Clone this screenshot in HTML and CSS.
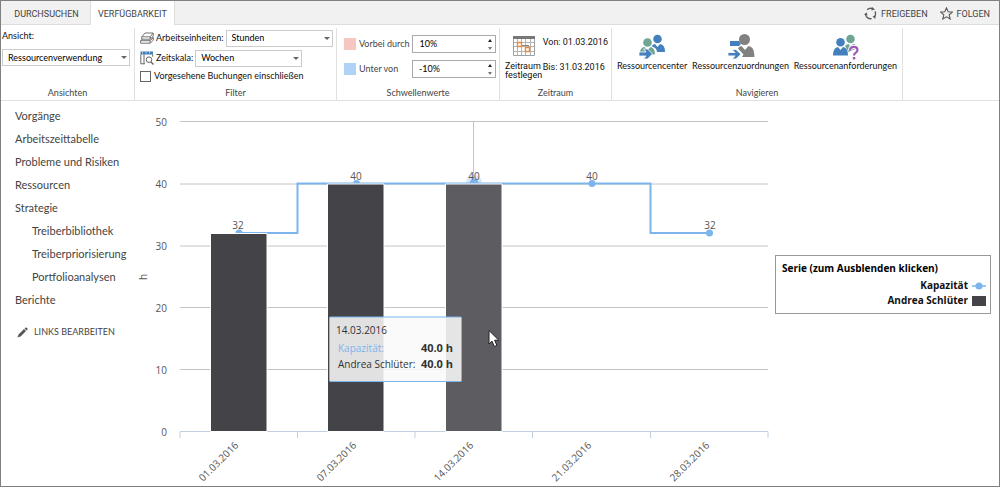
FILE: index.html
```html
<!DOCTYPE html>
<html lang="de">
<head>
<meta charset="utf-8">
<title>Ressourcenverwendung</title>
<link rel="stylesheet" href="styles.css">
</head>
<body>
<div class="app">
  <header class="topbar">
    <nav class="tabs">
      <button class="tab" type="button">DURCHSUCHEN</button>
      <button class="tab tab-active" type="button">VERFÜGBARKEIT</button>
    </nav>
    <div class="actions">
      <button class="action" type="button">
        <svg width="13" height="13" viewBox="0 0 13 13" fill="none" stroke="#5a5a5a" stroke-width="1.3"><path d="M3.2 2.8A5 5 0 0 1 8.6 1.7M11 4.4A5 5 0 0 1 10.2 9.9M7.6 11.6A5 5 0 0 1 1.6 7.6"/><path d="M8 0l3 2.6-3.6 1zM11.8 8.200l-.6 3.700-2.700-2.300zM0 7.800l2.600-2.600.9 3.400z" fill="#5a5a5a" stroke="none"/></svg>
        FREIGEBEN
      </button>
      <button class="action" type="button">
        <svg width="13" height="13" viewBox="0 0 13 13" fill="none" stroke="#5a5a5a" stroke-width="1.1"><path d="M6.500.9l1.700 3.900 4.200.3-3.200 2.700 1 4.200-3.700-2.200-3.700 2.200 1-4.200L.6 5.100l4.200-.3z"/></svg>
        FOLGEN
      </button>
    </div>
  </header>

  <section class="ribbon">
    <div class="group group-view">
      <div class="group-body">
        <label for="view">Ansicht:</label>
        <span class="select"><select id="view"><option>Ressourcenverwendung</option></select></span>
      </div>
      <h2 class="group-title">Ansichten</h2>
    </div>

    <div class="group group-filter">
      <div class="group-body">
        <div class="row">
          <svg width="14" height="12" viewBox="0 0 14 12" fill="#fff" stroke="#737373" stroke-width="1"><path d="M.6 8.700L4 5.700h9.300L10 8.700zM.6 8.700V11.200H10V8.700M10 11.200l3.300-3V5.700"/><path d="M1.800 4.800L5 1h8.200L10.200 4.800zM1.800 4.800v2.400h8.400V4.800M10.200 7.200l3-2.900V1"/></svg>
          <label for="units">Arbeitseinheiten:</label>
          <span class="select"><select id="units"><option>Stunden</option></select></span>
        </div>
        <div class="row">
          <svg width="14" height="14" viewBox="0 0 14 14" fill="none"><path d="M.5.5h12.500v3H.5z" fill="#3f7cb8"/><path d="M2 1.800h1M5.500 1.800h1M9 1.800h1" stroke="#fff"/><path d="M.8 3.500v9.300h4M4 3.500v9.300M12.700 3.500v2.200" stroke="#666"/><circle cx="9" cy="8.700" r="2.800" stroke="#666"/><path d="M11 10.900l2.500 2.600" stroke="#666" stroke-width="1.400"/></svg>
          <label for="scale">Zeitskala:</label>
          <span class="select"><select id="scale"><option>Wochen</option></select></span>
        </div>
        <label class="check"><input type="checkbox">Vorgesehene Buchungen einschließen</label>
      </div>
      <h2 class="group-title">Filter</h2>
    </div>

    <div class="group group-limits">
      <div class="group-body">
        <div class="limit">
          <span class="swatch swatch-over"></span>
          <label for="over">Vorbei durch</label>
          <span class="spin"><input id="over" type="text" value="10%"><span class="spin-buttons"><button class="up" type="button" aria-label="Mehr"></button><button class="down" type="button" aria-label="Weniger"></button></span></span>
        </div>
        <div class="limit">
          <span class="swatch swatch-under"></span>
          <label for="under">Unter von</label>
          <span class="spin"><input id="under" type="text" value="-10%"><span class="spin-buttons"><button class="up" type="button" aria-label="Mehr"></button><button class="down" type="button" aria-label="Weniger"></button></span></span>
        </div>
      </div>
      <h2 class="group-title">Schwellenwerte</h2>
    </div>

    <div class="group group-period">
      <div class="group-body">
        <button class="big" type="button">
          <svg width="22" height="20" viewBox="0 0 22 20" fill="none"><path d="M.5.5h21v19H.5z" fill="#fff" stroke="#a0a0a0"/><path d="M0 0h22v3H0z" fill="#777"/><path d="M4.500 3v16M8.500 3v16M12.500 3v16M17.500 3v16M1 6.500h20M1 10.500h20M1 15.500h20" stroke="#b4b4b4"/><path d="M8 9.500h8" stroke="#888"/><path d="M4.500 6.500h4v4h-4zM12.500 11.500h4v4h-4z" fill="#fff" stroke="#ee8b3a" stroke-width="1.400"/></svg>
          <span>Zeitraum<br>festlegen</span>
        </button>
        <div class="dates"><span>Von: 01.03.2016</span><span>Bis: 31.03.2016</span></div>
      </div>
      <h2 class="group-title">Zeitraum</h2>
    </div>

    <div class="group group-nav">
      <div class="group-body">
        <button class="big" type="button">
          <svg width="28" height="26" viewBox="0 0 28 26"><circle cx="19.500" cy="5" r="4.300" fill="#4480bd"/><path d="M13.500 12q2-2 3.500-2l2.500 3 2.500-3q5 .5 5 8h-8q0-4-5.500-6z" fill="#4480bd"/><circle cx="9.500" cy="8.500" r="4.300" fill="#6fa693"/><path d="M2 18q.5-4.500 4.500-5l3 3 3-3q4.500.5 4.500 7.500h-4l-3-3.500-3 .8z" fill="#6fa693"/><path d="M1 18h7L5.500 15H9.500l5 5-5 5H5.500L8 22H1z" fill="#4480bd" stroke="#fff" stroke-width=".8"/></svg>
          <span>Ressourcencenter</span>
        </button>
        <button class="big" type="button">
          <svg width="28" height="26" viewBox="0 0 28 26"><path d="M3 7h9l2 3-2 2H3z" fill="#4480bd"/><circle cx="17.500" cy="5.500" r="5.500" fill="#818181"/><path d="M11 14.500q1-2.500 3.500-2.500l3.500 4 3.500-4q6 .5 6 11H15l1.500-2.500z" fill="#818181"/><path d="M1 18.500h7L5 15.500h4l5 4.700-5 4.700H5l3-3H1z" fill="#4480bd" stroke="#fff" stroke-width=".8"/></svg>
          <span>Ressourcenzuordnungen</span>
        </button>
        <button class="big" type="button">
          <svg width="28" height="26" viewBox="0 0 28 26"><circle cx="19.500" cy="5" r="4.300" fill="#6fa693"/><path d="M14 12q1.500-2 3.500-2l2 2.500 2.500-2.500q3.500 0 4.500 4l-9 4z" fill="#6fa693"/><circle cx="9.500" cy="8.200" r="4.300" fill="#4480bd"/><path d="M2 21.500q0-8 5-8.500l2.500 3 2.500-3q5 .5 5 8.500z" fill="#4480bd"/><path d="M19 16.500q0-3.700 3.800-3.700 3.700 0 3.700 3.200 0 1.800-1.900 2.900-1.600 1-1.600 2.600" fill="none" stroke="#fff" stroke-width="4"/><path d="M19 16.500q0-3.700 3.800-3.700 3.700 0 3.700 3.200 0 1.800-1.900 2.900-1.600 1-1.600 2.600" fill="none" stroke="#9b5bb5" stroke-width="2.200"/><path d="M21.800 23h2.500v2.400h-2.500z" fill="#9b5bb5"/></svg>
          <span>Ressourcenanforderungen</span>
        </button>
      </div>
      <h2 class="group-title">Navigieren</h2>
    </div>
  </section>

  <main class="content">
    <nav class="sidebar">
      <ul>
        <li><a href="#">Vorgänge</a></li>
        <li><a href="#">Arbeitszeittabelle</a></li>
        <li><a href="#">Probleme und Risiken</a></li>
        <li><a href="#">Ressourcen</a></li>
        <li><a href="#">Strategie</a></li>
        <li class="sub"><a href="#">Treiberbibliothek</a></li>
        <li class="sub"><a href="#">Treiberpriorisierung</a></li>
        <li class="sub"><a href="#">Portfolioanalysen</a></li>
        <li><a href="#">Berichte</a></li>
      </ul>
      <a class="edit" href="#">
        <svg width="11" height="11" viewBox="0 0 11 11" fill="#555"><path d="M.5 10.500l1-3L7 2l2 2-5.500 5.500zM7.600 1.400L8.900.2l2 1.900-1.300 1.300z"/></svg>
        LINKS BEARBEITEN
      </a>
    </nav>

    <svg class="chart" viewBox="136 101 633 383">
      <g class="grid"><path d="M180 121.500h588M180 184h588M180 246h588M180 307.500h588M180 369.500h588"/></g>
      <path class="axis" d="M180 438v-6.500h588v6.500M297.500 431.500v6.500M415 431.500v6.500M532.500 431.500v6.500M650.500 431.500v6.500"/>
      <path class="crosshair" d="M473.500 122v62"/>
      <circle class="halo" cx="474" cy="183" r="8"/>
      <path class="capacity" d="M239 233h58.500v-49.500h353v49.500h59"/>
      <g class="dots"><circle cx="239" cy="233" r="3.500"/><circle cx="356.500" cy="183.500" r="3.500"/><circle cx="474" cy="183.500" r="4.500"/><circle cx="592" cy="183.500" r="3.500"/><circle cx="709.500" cy="233" r="3.500"/></g>
      <g class="bars"><path d="M210.500 233.500h56.500v198h-56.500zM327.500 184h56.500v247.500h-56.500z"/><path class="bar-hover" d="M445.500 184h56.500v247.500h-56.500z"/></g>
      <g class="values"><text x="238" y="229">32</text><text x="356" y="180">40</text><text x="474" y="180">40</text><text x="592" y="180">40</text><text x="710" y="229">32</text></g>
      <g class="y-labels"><text x="167" y="126">50</text><text x="167" y="188">40</text><text x="167" y="250">30</text><text x="167" y="312">20</text><text x="167" y="374">10</text><text x="167" y="436">0</text></g>
      <g class="x-labels">
        <text transform="translate(239 446) rotate(-45)">01.03.2016</text>
        <text transform="translate(357 446) rotate(-45)">07.03.2016</text>
        <text transform="translate(474 446) rotate(-45)">14.03.2016</text>
        <text transform="translate(592 446) rotate(-45)">21.03.2016</text>
        <text transform="translate(710 446) rotate(-45)">28.03.2016</text>
      </g>
      <text class="unit" transform="translate(147 280) rotate(-90)">h</text>
      <g class="tooltip">
        <rect x="329.500" y="317" width="132" height="64.500" rx="1"/>
        <text x="336" y="334">14.03.2016</text>
        <text class="tip-capacity" x="338" y="352">Kapazität:</text>
        <text x="338" y="368">Andrea Schlüter:</text>
        <text class="tip-value" x="453" y="352">40.0 h</text>
        <text class="tip-value" x="453" y="368">40.0 h</text>
      </g>
      <path class="cursor" d="M489 330.500v13.500l3-2.800 2.400 5.300 2.500-1.100-2.300-5.200h4.200z"/>
    </svg>

    <aside class="legend">
      <h3 class="legend-title">Serie (zum Ausblenden klicken)</h3>
      <button class="series" type="button">Kapazität<svg width="14" height="10" viewBox="0 0 14 10"><path d="M0 5h14" stroke="#7cb5ec" stroke-width="1.500"/><circle cx="7" cy="5" r="3.500" fill="#7cb5ec"/></svg></button>
      <button class="series" type="button">Andrea Schlüter<svg width="14" height="10" viewBox="0 0 14 10"><path d="M0 0h14v10H0z" fill="#434348"/></svg></button>
    </aside>
  </main>
</div>
</body>
</html>
```
FILE: styles.css
```css
* { box-sizing: border-box; }

body {
  margin: 0;
  background: #fff;
  color: #111;
  font-family: Lato, "Open Sans", sans-serif;
  font-size: 9px;
  line-height: 12px;
}

button {
  margin: 0;
  padding: 0;
  border: 0;
  background: none;
  color: inherit;
  font: inherit;
  cursor: pointer;
}

h2, h3 { margin: 0; }

svg { display: block; flex: none; }

.app {
  min-height: 100vh;
  border: 1px solid #808080;
}

.topbar {
  display: flex;
  justify-content: space-between;
  height: 24px;
  border-bottom: 1px solid #ddd;
  background: #f1f1f1;
  color: #444;
  font-family: Roboto, sans-serif;
}

.tabs { display: flex; }

.tab {
  min-width: 89px;
  padding: 2px 10px 0 12px;
}

.tab-active {
  min-width: 82px;
  height: 24px;
  padding: 2px 7px 0;
  border-left: 1px solid #ddd;
  border-right: 1px solid #ddd;
  background: #fff;
}

.actions {
  display: flex;
  gap: 12px;
  padding: 2px 9px 0 0;
}

.action {
  display: flex;
  align-items: center;
  gap: 4px;
}

.ribbon {
  display: flex;
  height: 76px;
  border-bottom: 1px solid #e1e1e1;
  white-space: nowrap;
}

.group {
  display: flex;
  flex-direction: column;
  flex: none;
  margin-top: 3px;
  border-right: 1px solid #e1e1e1;
}

.group-body { flex: 1; }

.group-title {
  padding-bottom: 1px;
  color: #444;
  font-size: 9px;
  font-weight: 400;
  text-align: center;
}

.group-view { width: 134px; }
.group-filter { width: 202px; }
.group-limits { width: 163px; }
.group-period { width: 112px; }
.group-nav { width: 291px; }

.select {
  position: relative;
  display: block;
}

.select::after {
  content: "";
  position: absolute;
  top: 7px;
  right: 3px;
  border: 3px solid transparent;
  border-top-color: #666;
  border-bottom: 0;
  pointer-events: none;
}

.select select {
  display: block;
  width: 100%;
  height: 17px;
  padding: 0 5px;
  border: 1px solid #ccc;
  border-radius: 0;
  background: #fff;
  color: #000;
  font: inherit;
  appearance: none;
}

.group-view .group-body {
  display: flex;
  flex-direction: column;
  gap: 7px;
  padding: 2px 4px 0 1px;
}

.group-filter .group-body { padding: 0 3px 0 5px; }

.row {
  display: flex;
  align-items: center;
  gap: 2px;
  height: 20px;
}

.row .select { width: 107px; }

.check {
  display: flex;
  align-items: center;
  gap: 3px;
  padding-top: 2px;
}

.check input {
  width: 11px;
  height: 11px;
  margin: 0;
  border: 1px solid #666;
  background: #fff;
  appearance: none;
}

.group-limits .group-body {
  display: flex;
  flex-direction: column;
  gap: 7px;
  padding: 7px 3px 0 7px;
}

.limit {
  display: flex;
  align-items: center;
  gap: 3px;
  color: #444;
}

.swatch {
  width: 12px;
  height: 12px;
}

.swatch-over { background: #f6c7c1; }
.swatch-under { background: #afd3f7; }

.spin {
  display: flex;
  width: 84px;
  height: 18px;
  margin-left: auto;
  border: 1px solid #aaa;
}

.spin input {
  width: 100%;
  min-width: 0;
  padding: 0 6px;
  border: 0;
  background: none;
  color: #000;
  font: inherit;
}

.spin-buttons {
  display: flex;
  flex-direction: column;
  justify-content: center;
  gap: 5px;
  padding-right: 3px;
}

.up, .down { border: 2px solid transparent; }
.up { border-top: 0; border-bottom: 3px solid #222; }
.down { border-bottom: 0; border-top: 3px solid #777; }

.group-period .group-body,
.group-nav .group-body {
  display: flex;
  align-items: flex-start;
}

.big {
  display: flex;
  flex-direction: column;
  align-items: center;
}

.group-period .group-body {
  justify-content: space-between;
  padding: 8px 3px 0 5px;
  font-family: Roboto, sans-serif;
}

.group-period .big {
  gap: 6px;
  line-height: 9px;
  text-align: left;
}

.dates {
  display: flex;
  flex-direction: column;
  gap: 13px;
}

.group-nav .group-body {
  justify-content: space-between;
  padding: 6px 5px 0;
}

.content {
  display: grid;
  grid-template-columns: 135px minmax(0, 1fr) 222px;
  padding-right: 8px;
}

.sidebar {
  padding: 3px 0 0 14px;
  color: #444;
  font-size: 11px;
  white-space: nowrap;
}

.sidebar a {
  color: inherit;
  text-decoration: none;
}

.sidebar ul {
  margin: 0;
  padding: 0;
  list-style: none;
  line-height: 23px;
}

.sidebar .sub { padding-left: 17px; }

.sidebar .edit {
  display: flex;
  align-items: center;
  gap: 6px;
  padding: 15px 0 0 2px;
  font-size: 9px;
}

.chart {
  width: 100%;
  height: auto;
  font-family: "Open Sans", sans-serif;
  font-size: 10px;
  fill: #555;
}

.grid path, .crosshair { fill: none; stroke: #c4c4c4; }
.axis { fill: none; stroke: #c0d0e0; }
.capacity { fill: none; stroke: #7cb5ec; stroke-width: 2; }
.dots { fill: #7cb5ec; }
.halo { fill: #7cb5ec; opacity: .3; }
.bars path { fill: #434348; stroke: #fff; }
.bars .bar-hover { fill: #5d5c61; }
.values { text-anchor: middle; }
.y-labels, .x-labels, .tip-value { text-anchor: end; }
.tooltip { fill: #333; }
.tooltip rect { fill: #f9f9f9; fill-opacity: .87; stroke: #7cb5ec; }
.tooltip .tip-capacity { fill: #7cb5ec; }
.tip-value { font-size: 11px; font-weight: 700; }
.cursor { fill: #fff; stroke: #222; }

.legend {
  display: flex;
  flex-direction: column;
  align-self: start;
  align-items: flex-end;
  margin: 154px 0 0 6px;
  padding: 6px 4px 5px;
  border: 1px solid #999;
  font-family: "Open Sans", sans-serif;
  font-size: 10px;
  font-weight: 700;
  line-height: 15px;
}

.legend-title {
  align-self: flex-start;
  padding: 0 0 4px 2px;
  color: #000;
  font-size: 10px;
  line-height: 12px;
}

.series {
  display: flex;
  align-items: center;
  gap: 4px;
}
```
